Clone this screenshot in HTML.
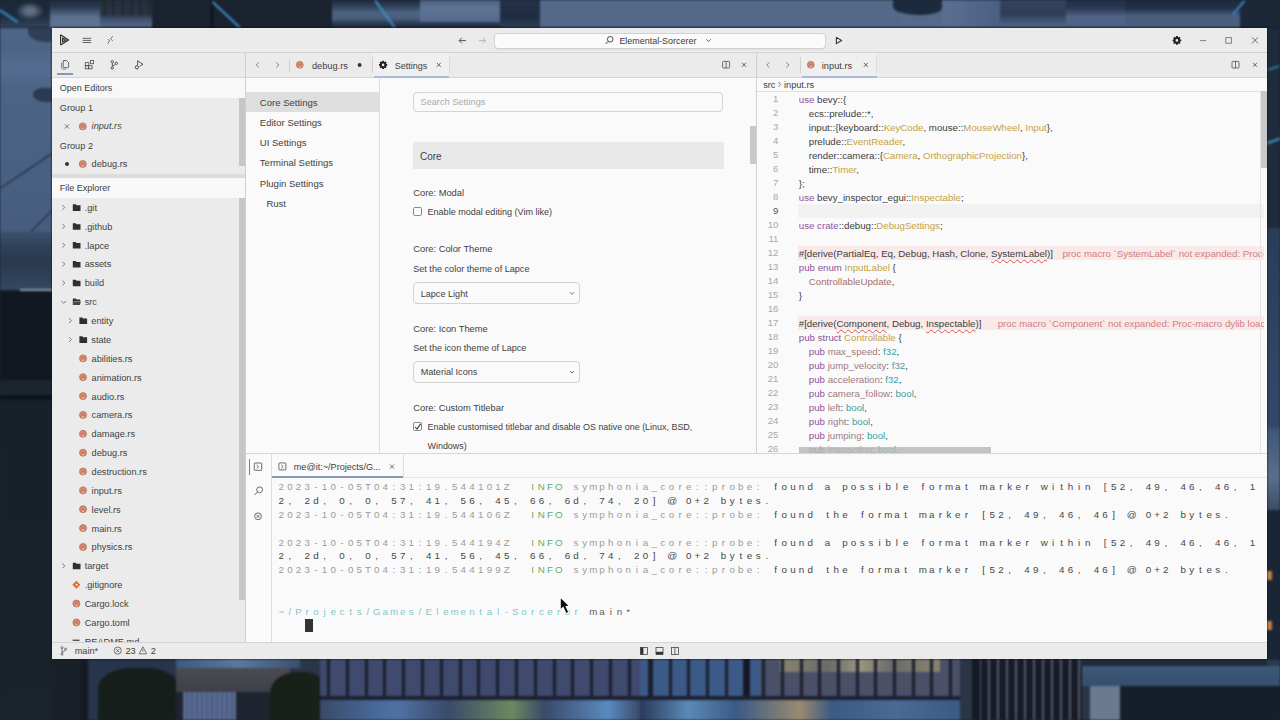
<!DOCTYPE html><html><head><meta charset="utf-8"><style>
html,body{margin:0;padding:0;}
body{width:1280px;height:720px;overflow:hidden;position:relative;background:#1b2330;font-family:"Liberation Sans",sans-serif;}
.r{position:absolute;}
.t{position:absolute;white-space:pre;line-height:1;}
.m{font-family:"Liberation Mono",monospace;}
.tr i{display:inline-block;width:8.675px;font-style:normal;text-align:center;}
</style></head><body>

<div class="r" style="left:0;top:0;width:1280px;height:720px;filter:blur(1.2px)">
<div class="r" style="left:0.00px;top:0.00px;width:1280.00px;height:28.00px;background:#55698a;"></div>
<div class="r" style="left:0.00px;top:0.00px;width:50.00px;height:28.00px;background:linear-gradient(180deg,#1c2838 0%,#1f2b3c 55%,#33465f 100%);"></div>
<div class="r" style="left:16.00px;top:2.00px;width:28.00px;height:18.00px;background:radial-gradient(closest-side,#5d6f86 30%,rgba(93,111,134,0));"></div>
<div class="r" style="left:0;top:9px;width:22px;height:2.2px;background:#2f8fcf;transform:rotate(34deg);transform-origin:0 0;"></div>
<div class="r" style="left:50.00px;top:0.00px;width:50.00px;height:28.00px;background:linear-gradient(180deg,#1f2b3c 0%,#2a3a50 25%,#5a7090 60%,#607694 100%);"></div>
<div class="r" style="left:100.00px;top:0.00px;width:52.00px;height:28.00px;background:linear-gradient(180deg,#262f3c 0%,#2a3342 50%,#465a78 75%,#54698a 100%);"></div>
<div class="r" style="left:104.00px;top:0.00px;width:46.00px;height:16.00px;background:repeating-linear-gradient(90deg,rgba(10,14,20,.6) 0,rgba(10,14,20,.6) 1px,rgba(0,0,0,0) 1px,rgba(0,0,0,0) 9px);"></div>
<div class="r" style="left:152.00px;top:0.00px;width:180.00px;height:28.00px;background:#1a2230;"></div>
<div class="r" style="left:210.50px;top:0.00px;width:2.00px;height:28.00px;background:#0a0e16;"></div>
<div class="r" style="left:213px;top:1px;width:38px;height:2.4px;background:#3c92c9;transform:rotate(43deg);transform-origin:0 0;"></div>
<div class="r" style="left:332.00px;top:0.00px;width:168.00px;height:28.00px;background:linear-gradient(180deg,#1e2a3c 0%,#2a3a52 18%,#4d6383 45%,#4a6080 65%,#283850 85%,#1e2a3a 100%);"></div>
<div class="r" style="left:420.00px;top:0.00px;width:80.00px;height:22.00px;background:linear-gradient(180deg,#4a6080,#5d7595 40%,#55698a);"></div>
<div class="r" style="left:376px;top:0px;width:33px;height:2px;background:#3f92c6;transform:rotate(54deg);transform-origin:0 0;"></div>
<div class="r" style="left:500.00px;top:0.00px;width:40.00px;height:28.00px;background:linear-gradient(180deg,#24324a 0%,#1f2c40 60%,#2f405a 100%);"></div>
<div class="r" style="left:540.00px;top:0.00px;width:360.00px;height:28.00px;background:linear-gradient(180deg,#55698a,#536889);"></div>
<div class="r" style="left:893.00px;top:0.00px;width:49.00px;height:15.00px;background:#1c2a3e;border-radius:0 0 45% 55%;"></div>
<div class="r" style="left:942.00px;top:0.00px;width:58.00px;height:28.00px;background:linear-gradient(90deg,#5a6f90,#4a6083);"></div>
<div class="r" style="left:1000.00px;top:0.00px;width:66.00px;height:28.00px;background:linear-gradient(180deg,#34455f 0%,#2e3d55 50%,#4d6283 90%);"></div>
<div class="r" style="left:1066.00px;top:0.00px;width:59.00px;height:28.00px;background:linear-gradient(180deg,#22304a 0%,#2a3a52 30%,#50658a 60%,#4d6283 100%);"></div>
<div class="r" style="left:1125.00px;top:0.00px;width:115.00px;height:28.00px;background:linear-gradient(180deg,#1e2a3c 0%,#22304a 30%,#4a5d7c 55%,#4d6080 100%);"></div>
<div class="r" style="left:1240.00px;top:0.00px;width:40.00px;height:28.00px;background:#1c2838;"></div>
<div class="r" style="left:1232px;top:14px;width:18px;height:2px;background:#3a8ac0;transform:rotate(-50deg);transform-origin:0 0;"></div>
<div class="r" style="left:0.00px;top:26.50px;width:1280.00px;height:1.50px;background:rgba(10,14,20,0.6);"></div>
<div class="r" style="left:0.00px;top:28.00px;width:52.00px;height:204.00px;background:linear-gradient(180deg,#4d6688 0%,#4a6385 50%,#465d7e 100%);"></div>
<div class="r" style="left:28.00px;top:28.00px;width:28.00px;height:14.00px;background:#2e3e56;border-radius:0 0 0 70%;"></div>
<div class="r" style="left:0.00px;top:50.00px;width:52.00px;height:40.00px;background:linear-gradient(180deg,rgba(90,116,152,0),rgba(90,116,152,.5) 50%,rgba(90,116,152,0));"></div>
<div class="r" style="left:33.00px;top:88.00px;width:23.00px;height:14.00px;background:#2a3a52;border-radius:50% 0 0 60%;"></div>
<div class="r" style="left:0;top:188px;width:62px;height:1.2px;background:#14202e;transform:rotate(-34deg);transform-origin:0 0;"></div>
<div class="r" style="left:0;top:262px;width:85px;height:1.2px;background:#14202e;transform:rotate(-45deg);transform-origin:0 0;"></div>
<div class="r" style="left:0.00px;top:232.00px;width:52.00px;height:58.00px;background:linear-gradient(180deg,#3a506c 0%,#2c3d54 35%,#2a3a50 55%,#34485f 100%);"></div>
<div class="r" style="left:20.00px;top:289.00px;width:32.00px;height:2.00px;background:#8a9cb0;"></div>
<div class="r" style="left:0.00px;top:291.00px;width:52.00px;height:89.00px;background:#111820;"></div>
<div class="r" style="left:0.00px;top:380.00px;width:52.00px;height:15.00px;background:#1a2530;"></div>
<div class="r" style="left:0.00px;top:395.00px;width:52.00px;height:5.00px;background:#0e141a;"></div>
<div class="r" style="left:0.00px;top:400.00px;width:52.00px;height:320.00px;background:linear-gradient(180deg,#18202a,#1a222c);"></div>
<div class="r" style="left:1267.00px;top:28.00px;width:13.00px;height:200.00px;background:#1d2b3c;"></div>
<div class="r" style="left:1267.00px;top:66.00px;width:13.00px;height:4.00px;background:linear-gradient(160deg,rgba(0,0,0,0) 30%,#3a8ac0 50%,rgba(0,0,0,0) 70%);"></div>
<div class="r" style="left:1267.00px;top:136.00px;width:13.00px;height:10.00px;background:linear-gradient(160deg,rgba(0,0,0,0) 35%,#4a96c8 50%,rgba(0,0,0,0) 65%);"></div>
<div class="r" style="left:1267.00px;top:228.00px;width:13.00px;height:200.00px;background:linear-gradient(180deg,#2a3d58,#34496a);"></div>
<div class="r" style="left:1267.00px;top:428.00px;width:13.00px;height:82.00px;background:linear-gradient(180deg,#3d5678,#5a6f8a 60%,#3a4d65);"></div>
<div class="r" style="left:1267.00px;top:510.00px;width:13.00px;height:150.00px;background:#1a2535;"></div>
<div class="r" style="left:1267.00px;top:571.00px;width:5.00px;height:9.00px;background:#c08040;"></div>
<div class="r" style="left:1267.00px;top:621.00px;width:5.00px;height:9.00px;background:#c08040;"></div>
<div class="r" style="left:1267.00px;top:660.00px;width:13.00px;height:60.00px;background:#2a3a4f;"></div>
<div class="r" style="left:52.00px;top:659.00px;width:1215.00px;height:61.00px;background:#2a3548;"></div>
<div class="r" style="left:52.00px;top:659.00px;width:28.00px;height:61.00px;background:#1a2028;"></div>
<div class="r" style="left:80.00px;top:659.00px;width:8.00px;height:61.00px;background:#141a22;"></div>
<div class="r" style="left:88.00px;top:659.00px;width:88.00px;height:61.00px;background:#26344c;"></div>
<div class="r" style="left:98.00px;top:668.00px;width:82.00px;height:52.00px;background:#161e1c;border-radius:40% 40% 0 0;"></div>
<div class="r" style="left:176.00px;top:659.00px;width:124.00px;height:9.00px;background:linear-gradient(90deg,#3a5a80,#5a78a0 50%,#3a5070);"></div>
<div class="r" style="left:176.00px;top:668.00px;width:114.00px;height:24.00px;background:linear-gradient(180deg,#4a4a52,#3e4048);"></div>
<div class="r" style="left:176.00px;top:692.00px;width:7.00px;height:28.00px;background:#1e2430;"></div>
<div class="r" style="left:183.00px;top:692.00px;width:53.00px;height:28.00px;background:repeating-linear-gradient(90deg,#5a6c94 0,#5a6c94 3px,#4a5a80 3px,#4a5a80 5px);"></div>
<div class="r" style="left:236.00px;top:692.00px;width:54.00px;height:28.00px;background:#1e2530;"></div>
<div class="r" style="left:270.00px;top:672.00px;width:60.00px;height:48.00px;background:#172019;border-radius:45% 45% 0 0;"></div>
<div class="r" style="left:320.00px;top:659.00px;width:320.00px;height:41.00px;background:#3f4a6e;"></div>
<div class="r" style="left:320.00px;top:659.00px;width:320.00px;height:38.00px;background:repeating-linear-gradient(90deg,#1a1e2c 0,#1a1e2c 3px,rgba(0,0,0,0) 3px,rgba(0,0,0,0) 18.8px);background-position:7px 0;"></div>
<div class="r" style="left:320.00px;top:696.00px;width:320.00px;height:4.00px;background:#1c2030;"></div>
<div class="r" style="left:320.00px;top:700.00px;width:320.00px;height:20.00px;background:linear-gradient(90deg,#3a4a6a,#4a6ca0 20%,#5070a0 25%,#3a4a6a 40%,#6a8a60 60%,#3a4a6a 70%,#5a8ac0 90%,#3a4a6a);"></div>
<div class="r" style="left:640.00px;top:659.00px;width:120.00px;height:41.00px;background:#3c5a88;"></div>
<div class="r" style="left:760.00px;top:659.00px;width:200.00px;height:41.00px;background:#4a5068;"></div>
<div class="r" style="left:780.00px;top:659.00px;width:160.00px;height:13.00px;background:linear-gradient(90deg,#8a8470,#6a6a68 30%,#9a9680 50%,#6a6a68 70%,#8a8470);"></div>
<div class="r" style="left:640.00px;top:659.00px;width:320.00px;height:38.00px;background:repeating-linear-gradient(90deg,#1a1e2c 0,#1a1e2c 3px,rgba(0,0,0,0) 3px,rgba(0,0,0,0) 18.7px);background-position:10px 0;"></div>
<div class="r" style="left:744.00px;top:659.00px;width:6.00px;height:61.00px;background:#141824;"></div>
<div class="r" style="left:640.00px;top:696.00px;width:320.00px;height:4.00px;background:#1c2030;"></div>
<div class="r" style="left:640.00px;top:700.00px;width:320.00px;height:20.00px;background:linear-gradient(90deg,#2a3a5a,#5a8ab8 15%,#3a5a85 30%,#9a8a70 50%,#3a5a85 60%,#4a6a95 80%,#3a5a85);"></div>
<div class="r" style="left:960.00px;top:659.00px;width:15.00px;height:61.00px;background:#2a3545;"></div>
<div class="r" style="left:972.00px;top:659.00px;width:110.00px;height:61.00px;background:repeating-linear-gradient(90deg,#161b26 0,#161b26 7px,#555b6a 7px,#555b6a 9px);"></div>
<div class="r" style="left:972.00px;top:659.00px;width:8.00px;height:61.00px;background:#141a24;"></div>
<div class="r" style="left:1080.00px;top:659.00px;width:187.00px;height:8.00px;background:#1f2a3a;"></div>
<div class="r" style="left:1082.00px;top:666.00px;width:198.00px;height:20.00px;background:linear-gradient(180deg,#3e5878,#34506e);"></div>
<div class="r" style="left:1090.00px;top:686.00px;width:30.00px;height:34.00px;background:#6a7a90;"></div>
<div class="r" style="left:1120.00px;top:686.00px;width:160.00px;height:34.00px;background:#151f2b;"></div>
</div>
<div class="r" style="left:52.00px;top:28.00px;width:1215.00px;height:631.00px;background:#fafafa;box-shadow:0 0 2px rgba(0,0,0,.35);"></div>
<div class="r" style="left:52.00px;top:28.00px;width:1215.00px;height:24.50px;background:#ebebeb;"></div>
<div class="r" style="left:52.00px;top:52.00px;width:1215.00px;height:1.00px;background:#d3d3d3;"></div>
<div class="r" style="left:493.50px;top:32.50px;width:332.20px;height:16.30px;background:#fbfbfb;border:1px solid #d2d2d2;border-radius:4px;box-sizing:border-box;box-shadow:0 1px 1px rgba(0,0,0,.06);"></div>
<div class="t" style="left:619.40px;top:36.82px;font-size:8.95px;color:#3a3a3a;">Elemental-Sorcerer</div>
<div class="r" style="left:52.00px;top:53.00px;width:193.50px;height:24.00px;background:#ebebeb;"></div>
<div class="r" style="left:52.00px;top:77.00px;width:193.50px;height:1.00px;background:#d6d6d6;"></div>
<div class="r" style="left:57.00px;top:73.20px;width:16.20px;height:1.50px;background:#8798bd;"></div>
<div class="r" style="left:52.00px;top:78.00px;width:193.50px;height:20.00px;background:#f8f8f8;"></div>
<div class="t" style="left:59.80px;top:84.38px;font-size:9.0px;color:#3f3f3f;">Open Editors</div>
<div class="r" style="left:52.00px;top:98.00px;width:193.50px;height:75.50px;background:#ebebeb;"></div>
<div class="r" style="left:238.80px;top:98.00px;width:6.70px;height:68.00px;background:#c6c6c6;"></div>
<div class="t" style="left:59.80px;top:103.61px;font-size:9.2px;color:#3f3f3f;">Group 1</div>
<div class="t" style="left:91.60px;top:121.71px;font-size:9.2px;color:#3f3f3f;font-style:italic;">input.rs</div>
<div class="t" style="left:59.80px;top:141.61px;font-size:9.2px;color:#3f3f3f;">Group 2</div>
<div class="t" style="left:91.60px;top:160.01px;font-size:9.2px;color:#3f3f3f;">debug.rs</div>
<div class="r" style="left:52.00px;top:173.50px;width:193.50px;height:4.30px;background:#dcdcdc;"></div>
<div class="r" style="left:52.00px;top:177.80px;width:193.50px;height:20.20px;background:#f8f8f8;"></div>
<div class="t" style="left:59.80px;top:184.18px;font-size:9.0px;color:#3f3f3f;">File Explorer</div>
<div class="r" style="left:52.00px;top:198.00px;width:193.50px;height:444.40px;background:#ebebeb;"></div>
<div class="r" style="left:238.60px;top:198.00px;width:6.90px;height:402.00px;background:#c6c6c6;"></div>
<div class="t" style="left:84.70px;top:203.91px;font-size:9.2px;color:#3f3f3f;">.git</div>
<div class="t" style="left:84.70px;top:222.77px;font-size:9.2px;color:#3f3f3f;">.github</div>
<div class="t" style="left:84.70px;top:241.63px;font-size:9.2px;color:#3f3f3f;">.lapce</div>
<div class="t" style="left:84.70px;top:260.49px;font-size:9.2px;color:#3f3f3f;">assets</div>
<div class="t" style="left:84.70px;top:279.35px;font-size:9.2px;color:#3f3f3f;">build</div>
<div class="t" style="left:84.70px;top:298.21px;font-size:9.2px;color:#3f3f3f;">src</div>
<div class="t" style="left:91.30px;top:317.07px;font-size:9.2px;color:#3f3f3f;">entity</div>
<div class="t" style="left:91.30px;top:335.93px;font-size:9.2px;color:#3f3f3f;">state</div>
<div class="t" style="left:91.60px;top:354.79px;font-size:9.2px;color:#3f3f3f;">abilities.rs</div>
<div class="t" style="left:91.60px;top:373.65px;font-size:9.2px;color:#3f3f3f;">animation.rs</div>
<div class="t" style="left:91.60px;top:392.51px;font-size:9.2px;color:#3f3f3f;">audio.rs</div>
<div class="t" style="left:91.60px;top:411.37px;font-size:9.2px;color:#3f3f3f;">camera.rs</div>
<div class="t" style="left:91.60px;top:430.23px;font-size:9.2px;color:#3f3f3f;">damage.rs</div>
<div class="t" style="left:91.60px;top:449.09px;font-size:9.2px;color:#3f3f3f;">debug.rs</div>
<div class="t" style="left:91.60px;top:467.95px;font-size:9.2px;color:#3f3f3f;">destruction.rs</div>
<div class="t" style="left:91.60px;top:486.81px;font-size:9.2px;color:#3f3f3f;">input.rs</div>
<div class="t" style="left:91.60px;top:505.67px;font-size:9.2px;color:#3f3f3f;">level.rs</div>
<div class="t" style="left:91.60px;top:524.53px;font-size:9.2px;color:#3f3f3f;">main.rs</div>
<div class="t" style="left:91.60px;top:543.39px;font-size:9.2px;color:#3f3f3f;">physics.rs</div>
<div class="t" style="left:84.70px;top:562.25px;font-size:9.2px;color:#3f3f3f;">target</div>
<div class="t" style="left:84.70px;top:581.11px;font-size:9.2px;color:#3f3f3f;">.gitignore</div>
<div class="t" style="left:84.70px;top:599.97px;font-size:9.2px;color:#3f3f3f;">Cargo.lock</div>
<div class="t" style="left:84.70px;top:618.83px;font-size:9.2px;color:#3f3f3f;">Cargo.toml</div>
<div class="t" style="left:84.70px;top:637.69px;font-size:9.2px;color:#3f3f3f;">README.md</div>
<div class="r" style="left:52.00px;top:642.00px;width:1215.00px;height:17.00px;background:#ebebeb;"></div>
<div class="r" style="left:52.00px;top:642.00px;width:1215.00px;height:1.00px;background:#d4d4d4;"></div>
<div class="r" style="left:245.00px;top:53.00px;width:1.00px;height:589.00px;background:#d0d0d0;"></div>
<div class="r" style="left:246.30px;top:53.00px;width:510.20px;height:24.00px;background:#ebebeb;"></div>
<div class="r" style="left:246.30px;top:77.00px;width:510.20px;height:1.00px;background:#d6d6d6;"></div>
<div class="r" style="left:289.00px;top:59.50px;width:1.00px;height:12.00px;background:#cfcfcf;"></div>
<div class="t" style="left:311.90px;top:61.57px;font-size:9.25px;color:#3f3f3f;">debug.rs</div>
<div class="r" style="left:372.00px;top:57.00px;width:1.00px;height:16.00px;background:#cfcfcf;"></div>
<div class="r" style="left:372.70px;top:53.00px;width:76.50px;height:24.00px;background:#efefef;"></div>
<div class="t" style="left:394.80px;top:61.78px;font-size:9.0px;color:#3f3f3f;">Settings</div>
<div class="r" style="left:373.50px;top:76.00px;width:75.70px;height:1.60px;background:#a9bada;"></div>
<div class="r" style="left:449.00px;top:57.00px;width:1.00px;height:16.00px;background:#dadada;"></div>
<div class="r" style="left:246.30px;top:78.00px;width:132.90px;height:375.00px;background:#fafafa;"></div>
<div class="r" style="left:379.00px;top:78.00px;width:1.00px;height:375.00px;background:#dedede;"></div>
<div class="r" style="left:246.30px;top:91.60px;width:132.90px;height:20.20px;background:#dedede;"></div>
<div class="t" style="left:259.80px;top:98.02px;font-size:9.55px;color:#3f3f3f;">Core Settings</div>
<div class="t" style="left:259.80px;top:117.92px;font-size:9.55px;color:#3f3f3f;">Editor Settings</div>
<div class="t" style="left:259.80px;top:138.12px;font-size:9.55px;color:#3f3f3f;">UI Settings</div>
<div class="t" style="left:259.80px;top:158.32px;font-size:9.55px;color:#3f3f3f;">Terminal Settings</div>
<div class="t" style="left:259.80px;top:178.62px;font-size:9.55px;color:#3f3f3f;">Plugin Settings</div>
<div class="t" style="left:266.40px;top:198.82px;font-size:9.55px;color:#3f3f3f;">Rust</div>
<div class="r" style="left:380.00px;top:78.00px;width:376.50px;height:375.00px;background:#fafafa;"></div>
<div class="r" style="left:413.10px;top:91.90px;width:309.70px;height:20.00px;background:#fafafa;border:1px solid #d4d4d4;border-radius:4px;box-sizing:border-box;"></div>
<div class="t" style="left:420.50px;top:97.91px;font-size:9.2px;color:#ababab;">Search Settings</div>
<div class="r" style="left:413.10px;top:141.90px;width:310.60px;height:26.80px;background:#e9e9e9;"></div>
<div class="t" style="left:420.00px;top:151.53px;font-size:10.0px;color:#3f3f3f;">Core</div>
<div class="r" style="left:750.30px;top:126.20px;width:6.00px;height:38.20px;background:#c8c8c8;"></div>
<div class="t" style="left:413.20px;top:188.59px;font-size:9.35px;color:#3f3f3f;">Core: Modal</div>
<div class="r" style="left:412.9px;top:207.4px;width:9px;height:9px;border:1px solid #8a8a8a;border-radius:1.8px;box-sizing:border-box;"></div>
<div class="t" style="left:427.50px;top:208.14px;font-size:9.05px;color:#3f3f3f;">Enable modal editing (Vim like)</div>
<div class="t" style="left:413.20px;top:245.19px;font-size:9.35px;color:#3f3f3f;">Core: Color Theme</div>
<div class="t" style="left:413.20px;top:264.70px;font-size:9.1px;color:#3f3f3f;">Set the color theme of Lapce</div>
<div class="r" style="left:413.40px;top:282.40px;width:167.00px;height:22.00px;background:#fafafa;border:1px solid #d2d2d2;border-radius:4px;box-sizing:border-box;"></div>
<div class="t" style="left:420.70px;top:289.90px;font-size:9.1px;color:#3f3f3f;">Lapce Light</div>
<div class="t" style="left:413.20px;top:324.69px;font-size:9.35px;color:#3f3f3f;">Core: Icon Theme</div>
<div class="t" style="left:413.20px;top:344.10px;font-size:9.1px;color:#3f3f3f;">Set the icon theme of Lapce</div>
<div class="r" style="left:413.40px;top:361.00px;width:167.00px;height:22.30px;background:#fafafa;border:1px solid #d2d2d2;border-radius:4px;box-sizing:border-box;"></div>
<div class="t" style="left:420.70px;top:368.40px;font-size:9.1px;color:#3f3f3f;">Material Icons</div>
<div class="t" style="left:413.20px;top:403.89px;font-size:9.35px;color:#3f3f3f;">Core: Custom Titlebar</div>
<div class="r" style="left:412.9px;top:422.40000000000003px;width:9px;height:9px;border:1px solid #8a8a8a;border-radius:1.8px;box-sizing:border-box;"></div>
<div class="t" style="left:427.50px;top:423.42px;font-size:8.95px;color:#3f3f3f;">Enable customised titlebar and disable OS native one (Linux, BSD,</div>
<div class="t" style="left:427.50px;top:442.12px;font-size:8.95px;color:#3f3f3f;">Windows)</div>
<div class="r" style="left:756.00px;top:53.00px;width:1.00px;height:400.00px;background:#d0d0d0;"></div>
<div class="r" style="left:757.30px;top:53.00px;width:509.70px;height:24.00px;background:#ebebeb;"></div>
<div class="r" style="left:757.30px;top:77.00px;width:509.70px;height:1.00px;background:#d6d6d6;"></div>
<div class="r" style="left:800.00px;top:57.00px;width:1.00px;height:16.00px;background:#d0d0d0;"></div>
<div class="r" style="left:801.00px;top:53.00px;width:75.50px;height:24.00px;background:#efefef;"></div>
<div class="t" style="left:821.80px;top:61.57px;font-size:9.25px;color:#3f3f3f;">input.rs</div>
<div class="r" style="left:801.50px;top:76.00px;width:75.00px;height:1.60px;background:#a9bada;"></div>
<div class="r" style="left:876.00px;top:57.00px;width:1.00px;height:16.00px;background:#dadada;"></div>
<div class="r" style="left:757.30px;top:78.00px;width:509.70px;height:13.40px;background:#fafafa;"></div>
<div class="r" style="left:757.30px;top:91.00px;width:509.70px;height:1.00px;background:#e2e2e2;"></div>
<div class="t" style="left:763.20px;top:80.71px;font-size:9.2px;color:#3f3f3f;">src</div>
<div class="t" style="left:784.00px;top:80.71px;font-size:9.2px;color:#3f3f3f;">input.rs</div>
<div class="r" style="left:757.30px;top:92.00px;width:509.70px;height:361.00px;background:#fafafa;"></div>
<div class="r" style="left:798.00px;top:204.00px;width:466.00px;height:14.00px;background:#f2f2f2;"></div>
<div class="r" style="left:798.00px;top:246.00px;width:466.00px;height:14.00px;background:#f9e9e9;"></div>
<div class="r" style="left:798.00px;top:316.00px;width:466.00px;height:14.00px;background:#f9e9e9;"></div>
<div class="r" style="left:0;top:0;width:1264px;height:453px;overflow:hidden">
<div class="t" style="left:739.4px;width:39px;text-align:right;top:94.47px;font-size:9.6px;color:#a8a8a8;">1</div>
<div class="t" style="left:739.4px;width:39px;text-align:right;top:108.47px;font-size:9.6px;color:#a8a8a8;">2</div>
<div class="t" style="left:739.4px;width:39px;text-align:right;top:122.47px;font-size:9.6px;color:#a8a8a8;">3</div>
<div class="t" style="left:739.4px;width:39px;text-align:right;top:136.47px;font-size:9.6px;color:#a8a8a8;">4</div>
<div class="t" style="left:739.4px;width:39px;text-align:right;top:150.47px;font-size:9.6px;color:#a8a8a8;">5</div>
<div class="t" style="left:739.4px;width:39px;text-align:right;top:164.47px;font-size:9.6px;color:#a8a8a8;">6</div>
<div class="t" style="left:739.4px;width:39px;text-align:right;top:178.47px;font-size:9.6px;color:#a8a8a8;">7</div>
<div class="t" style="left:739.4px;width:39px;text-align:right;top:192.47px;font-size:9.6px;color:#a8a8a8;">8</div>
<div class="t" style="left:739.4px;width:39px;text-align:right;top:206.47px;font-size:9.6px;color:#555;">9</div>
<div class="t" style="left:739.4px;width:39px;text-align:right;top:220.47px;font-size:9.6px;color:#a8a8a8;">10</div>
<div class="t" style="left:739.4px;width:39px;text-align:right;top:234.47px;font-size:9.6px;color:#a8a8a8;">11</div>
<div class="t" style="left:739.4px;width:39px;text-align:right;top:248.47px;font-size:9.6px;color:#a8a8a8;">12</div>
<div class="t" style="left:739.4px;width:39px;text-align:right;top:262.47px;font-size:9.6px;color:#a8a8a8;">13</div>
<div class="t" style="left:739.4px;width:39px;text-align:right;top:276.47px;font-size:9.6px;color:#a8a8a8;">14</div>
<div class="t" style="left:739.4px;width:39px;text-align:right;top:290.47px;font-size:9.6px;color:#a8a8a8;">15</div>
<div class="t" style="left:739.4px;width:39px;text-align:right;top:304.47px;font-size:9.6px;color:#a8a8a8;">16</div>
<div class="t" style="left:739.4px;width:39px;text-align:right;top:318.47px;font-size:9.6px;color:#a8a8a8;">17</div>
<div class="t" style="left:739.4px;width:39px;text-align:right;top:332.47px;font-size:9.6px;color:#a8a8a8;">18</div>
<div class="t" style="left:739.4px;width:39px;text-align:right;top:346.47px;font-size:9.6px;color:#a8a8a8;">19</div>
<div class="t" style="left:739.4px;width:39px;text-align:right;top:360.47px;font-size:9.6px;color:#a8a8a8;">20</div>
<div class="t" style="left:739.4px;width:39px;text-align:right;top:374.47px;font-size:9.6px;color:#a8a8a8;">21</div>
<div class="t" style="left:739.4px;width:39px;text-align:right;top:388.47px;font-size:9.6px;color:#a8a8a8;">22</div>
<div class="t" style="left:739.4px;width:39px;text-align:right;top:402.47px;font-size:9.6px;color:#a8a8a8;">23</div>
<div class="t" style="left:739.4px;width:39px;text-align:right;top:416.47px;font-size:9.6px;color:#a8a8a8;">24</div>
<div class="t" style="left:739.4px;width:39px;text-align:right;top:430.47px;font-size:9.6px;color:#a8a8a8;">25</div>
<div class="t" style="left:739.4px;width:39px;text-align:right;top:444.47px;font-size:9.6px;color:#a8a8a8;">26</div>
<div class="t" style="left:798.75px;top:94.99px;font-size:9.7px;color:#3d3d3d;"><span style="color:#8c559a">use</span> bevy::{</div>
<div class="t" style="left:808.75px;top:108.99px;font-size:9.7px;color:#3d3d3d;">ecs::prelude::*,</div>
<div class="t" style="left:808.75px;top:122.99px;font-size:9.7px;color:#3d3d3d;">input::{keyboard::<span style="color:#c4a347">KeyCode</span>, mouse::<span style="color:#c4a347">MouseWheel</span>, <span style="color:#c4a347">Input</span>},</div>
<div class="t" style="left:808.75px;top:136.99px;font-size:9.7px;color:#3d3d3d;">prelude::<span style="color:#c4a347">EventReader</span>,</div>
<div class="t" style="left:808.75px;top:150.99px;font-size:9.7px;color:#3d3d3d;">render::camera::{<span style="color:#c4a347">Camera</span>, <span style="color:#c4a347">OrthographicProjection</span>},</div>
<div class="t" style="left:808.75px;top:164.99px;font-size:9.7px;color:#3d3d3d;">time::<span style="color:#c4a347">Timer</span>,</div>
<div class="t" style="left:798.75px;top:178.99px;font-size:9.7px;color:#3d3d3d;">};</div>
<div class="t" style="left:798.75px;top:192.99px;font-size:9.7px;color:#3d3d3d;"><span style="color:#8c559a">use</span> bevy_inspector_egui::<span style="color:#c4a347">Inspectable</span>;</div>
<div class="t" style="left:798.75px;top:220.99px;font-size:9.7px;color:#3d3d3d;"><span style="color:#8c559a">use</span> <span style="color:#8c559a">crate</span>::debug::<span style="color:#c4a347">DebugSettings</span>;</div>
<div class="t" style="left:798.75px;top:248.99px;font-size:9.7px;color:#3d3d3d;">#[derive(PartialEq, Eq, Debug, Hash, Clone, <span style="text-decoration:underline wavy #e05050;text-decoration-thickness:0.6px;text-underline-offset:2px">SystemLabel</span>)]</div>
<div class="t" style="left:1062.40px;top:248.99px;font-size:9.7px;color:#cf7f7f;">proc macro `SystemLabel` not expanded: Proc-macro dylib loading failed</div>
<div class="t" style="left:798.75px;top:262.99px;font-size:9.7px;color:#3d3d3d;"><span style="color:#8c559a">pub</span> <span style="color:#8c559a">enum</span> <span style="color:#c4a347">InputLabel</span> {</div>
<div class="t" style="left:808.75px;top:276.99px;font-size:9.7px;color:#3d3d3d;"><span style="color:#a36f6f">ControllableUpdate</span>,</div>
<div class="t" style="left:798.75px;top:290.99px;font-size:9.7px;color:#3d3d3d;">}</div>
<div class="t" style="left:798.75px;top:318.99px;font-size:9.7px;color:#3d3d3d;">#[derive(<span style="text-decoration:underline wavy #e05050;text-decoration-thickness:0.6px;text-underline-offset:2px">Component</span>, Debug, <span style="text-decoration:underline wavy #e05050;text-decoration-thickness:0.6px;text-underline-offset:2px">Inspectable</span>)]</div>
<div class="t" style="left:997.70px;top:318.99px;font-size:9.7px;color:#cf7f7f;">proc macro `Component` not expanded: Proc-macro dylib loading failed</div>
<div class="t" style="left:798.75px;top:332.99px;font-size:9.7px;color:#3d3d3d;"><span style="color:#8c559a">pub</span> <span style="color:#8c559a">struct</span> <span style="color:#c4a347">Controllable</span> {</div>
<div class="t" style="left:808.75px;top:346.99px;font-size:9.7px;color:#3d3d3d;"><span style="color:#8c559a">pub</span> <span style="color:#9e7a82">max_speed</span>: <span style="color:#3c9ea4">f32</span>,</div>
<div class="t" style="left:808.75px;top:360.99px;font-size:9.7px;color:#3d3d3d;"><span style="color:#8c559a">pub</span> <span style="color:#9e7a82">jump_velocity</span>: <span style="color:#3c9ea4">f32</span>,</div>
<div class="t" style="left:808.75px;top:374.99px;font-size:9.7px;color:#3d3d3d;"><span style="color:#8c559a">pub</span> <span style="color:#9e7a82">acceleration</span>: <span style="color:#3c9ea4">f32</span>,</div>
<div class="t" style="left:808.75px;top:388.99px;font-size:9.7px;color:#3d3d3d;"><span style="color:#8c559a">pub</span> <span style="color:#9e7a82">camera_follow</span>: <span style="color:#3c9ea4">bool</span>,</div>
<div class="t" style="left:808.75px;top:402.99px;font-size:9.7px;color:#3d3d3d;"><span style="color:#8c559a">pub</span> <span style="color:#9e7a82">left</span>: <span style="color:#3c9ea4">bool</span>,</div>
<div class="t" style="left:808.75px;top:416.99px;font-size:9.7px;color:#3d3d3d;"><span style="color:#8c559a">pub</span> <span style="color:#9e7a82">right</span>: <span style="color:#3c9ea4">bool</span>,</div>
<div class="t" style="left:808.75px;top:430.99px;font-size:9.7px;color:#3d3d3d;"><span style="color:#8c559a">pub</span> <span style="color:#9e7a82">jumping</span>: <span style="color:#3c9ea4">bool</span>,</div>
<div class="t" style="left:808.75px;top:444.99px;font-size:9.7px;color:#3d3d3d;"><span style="color:#8c559a">pub</span> <span style="color:#9e7a82">interacting</span>: <span style="color:#3c9ea4">bool</span>,</div>
</div>
<div class="r" style="left:1260.00px;top:92.00px;width:1.00px;height:361.00px;background:#e4e4e4;"></div>
<div class="r" style="left:1261.00px;top:90.50px;width:5.50px;height:77.00px;background:#c8c8c8;"></div>
<div class="r" style="left:798.50px;top:447.30px;width:192.10px;height:6.20px;background:rgba(185,185,185,0.85);"></div>
<div class="r" style="left:1267.00px;top:28.00px;width:13.00px;height:631.00px;background:transparent;"></div>
<div class="r" style="left:246.30px;top:453.00px;width:1020.70px;height:189.00px;background:#fafafa;"></div>
<div class="r" style="left:246.30px;top:453.00px;width:1020.70px;height:1.00px;background:#d6d6d6;"></div>
<div class="r" style="left:271.00px;top:453.00px;width:1.00px;height:189.00px;background:#dcdcdc;"></div>
<div class="r" style="left:249.00px;top:459.00px;width:1.00px;height:16.00px;background:#6f7f9c;"></div>
<div class="r" style="left:271.80px;top:453.90px;width:131.70px;height:23.40px;background:#fafafa;"></div>
<div class="r" style="left:271.80px;top:477.00px;width:995.20px;height:1.00px;background:#e6e6e6;"></div>
<div class="r" style="left:272.20px;top:476.20px;width:130.80px;height:1.60px;background:#8798b8;"></div>
<div class="r" style="left:403.00px;top:453.90px;width:1.00px;height:23.40px;background:#dedede;"></div>
<div class="t" style="left:293.80px;top:462.80px;font-size:9.1px;color:#3f3f3f;">me@it:~/Projects/G...</div>
<div class="t tr" style="left:276.90px;top:481.70px;font-size:9.8px;"><span style="color:#9a9a9a"><i>2</i><i>0</i><i>2</i><i>3</i><i>-</i><i>1</i><i>0</i><i>-</i><i>0</i><i>5</i><i>T</i><i>0</i><i>4</i><i>:</i><i>3</i><i>1</i><i>:</i><i>1</i><i>9</i><i>.</i><i>5</i><i>4</i><i>4</i><i>1</i><i>0</i><i>1</i><i>Z</i></span><span style="color:#474747"><i>&nbsp;</i><i>&nbsp;</i></span><span style="color:#62ad62"><i>I</i><i>N</i><i>F</i><i>O</i></span><span style="color:#474747"><i>&nbsp;</i></span><span style="color:#9a9a9a"><i>s</i><i>y</i><i>m</i><i>p</i><i>h</i><i>o</i><i>n</i><i>i</i><i>a</i><i>_</i><i>c</i><i>o</i><i>r</i><i>e</i><i>:</i><i>:</i><i>p</i><i>r</i><i>o</i><i>b</i><i>e</i><i>:</i></span><span style="color:#474747"><i>&nbsp;</i><i>f</i><i>o</i><i>u</i><i>n</i><i>d</i><i>&nbsp;</i><i>a</i><i>&nbsp;</i><i>p</i><i>o</i><i>s</i><i>s</i><i>i</i><i>b</i><i>l</i><i>e</i><i>&nbsp;</i><i>f</i><i>o</i><i>r</i><i>m</i><i>a</i><i>t</i><i>&nbsp;</i><i>m</i><i>a</i><i>r</i><i>k</i><i>e</i><i>r</i><i>&nbsp;</i><i>w</i><i>i</i><i>t</i><i>h</i><i>i</i><i>n</i><i>&nbsp;</i><i>[</i><i>5</i><i>2</i><i>,</i><i>&nbsp;</i><i>4</i><i>9</i><i>,</i><i>&nbsp;</i><i>4</i><i>6</i><i>,</i><i>&nbsp;</i><i>4</i><i>6</i><i>,</i><i>&nbsp;</i><i>1</i></span></div>
<div class="t tr" style="left:276.90px;top:495.65px;font-size:9.8px;"><span style="color:#474747"><i>2</i><i>,</i><i>&nbsp;</i><i>2</i><i>d</i><i>,</i><i>&nbsp;</i><i>0</i><i>,</i><i>&nbsp;</i><i>0</i><i>,</i><i>&nbsp;</i><i>5</i><i>7</i><i>,</i><i>&nbsp;</i><i>4</i><i>1</i><i>,</i><i>&nbsp;</i><i>5</i><i>6</i><i>,</i><i>&nbsp;</i><i>4</i><i>5</i><i>,</i><i>&nbsp;</i><i>6</i><i>6</i><i>,</i><i>&nbsp;</i><i>6</i><i>d</i><i>,</i><i>&nbsp;</i><i>7</i><i>4</i><i>,</i><i>&nbsp;</i><i>2</i><i>0</i><i>]</i><i>&nbsp;</i><i>@</i><i>&nbsp;</i><i>0</i><i>+</i><i>2</i><i>&nbsp;</i><i>b</i><i>y</i><i>t</i><i>e</i><i>s</i><i>.</i></span></div>
<div class="t tr" style="left:276.90px;top:509.60px;font-size:9.8px;"><span style="color:#9a9a9a"><i>2</i><i>0</i><i>2</i><i>3</i><i>-</i><i>1</i><i>0</i><i>-</i><i>0</i><i>5</i><i>T</i><i>0</i><i>4</i><i>:</i><i>3</i><i>1</i><i>:</i><i>1</i><i>9</i><i>.</i><i>5</i><i>4</i><i>4</i><i>1</i><i>0</i><i>6</i><i>Z</i></span><span style="color:#474747"><i>&nbsp;</i><i>&nbsp;</i></span><span style="color:#62ad62"><i>I</i><i>N</i><i>F</i><i>O</i></span><span style="color:#474747"><i>&nbsp;</i></span><span style="color:#9a9a9a"><i>s</i><i>y</i><i>m</i><i>p</i><i>h</i><i>o</i><i>n</i><i>i</i><i>a</i><i>_</i><i>c</i><i>o</i><i>r</i><i>e</i><i>:</i><i>:</i><i>p</i><i>r</i><i>o</i><i>b</i><i>e</i><i>:</i></span><span style="color:#474747"><i>&nbsp;</i><i>f</i><i>o</i><i>u</i><i>n</i><i>d</i><i>&nbsp;</i><i>t</i><i>h</i><i>e</i><i>&nbsp;</i><i>f</i><i>o</i><i>r</i><i>m</i><i>a</i><i>t</i><i>&nbsp;</i><i>m</i><i>a</i><i>r</i><i>k</i><i>e</i><i>r</i><i>&nbsp;</i><i>[</i><i>5</i><i>2</i><i>,</i><i>&nbsp;</i><i>4</i><i>9</i><i>,</i><i>&nbsp;</i><i>4</i><i>6</i><i>,</i><i>&nbsp;</i><i>4</i><i>6</i><i>]</i><i>&nbsp;</i><i>@</i><i>&nbsp;</i><i>0</i><i>+</i><i>2</i><i>&nbsp;</i><i>b</i><i>y</i><i>t</i><i>e</i><i>s</i><i>.</i></span></div>
<div class="t tr" style="left:276.90px;top:537.50px;font-size:9.8px;"><span style="color:#9a9a9a"><i>2</i><i>0</i><i>2</i><i>3</i><i>-</i><i>1</i><i>0</i><i>-</i><i>0</i><i>5</i><i>T</i><i>0</i><i>4</i><i>:</i><i>3</i><i>1</i><i>:</i><i>1</i><i>9</i><i>.</i><i>5</i><i>4</i><i>4</i><i>1</i><i>9</i><i>4</i><i>Z</i></span><span style="color:#474747"><i>&nbsp;</i><i>&nbsp;</i></span><span style="color:#62ad62"><i>I</i><i>N</i><i>F</i><i>O</i></span><span style="color:#474747"><i>&nbsp;</i></span><span style="color:#9a9a9a"><i>s</i><i>y</i><i>m</i><i>p</i><i>h</i><i>o</i><i>n</i><i>i</i><i>a</i><i>_</i><i>c</i><i>o</i><i>r</i><i>e</i><i>:</i><i>:</i><i>p</i><i>r</i><i>o</i><i>b</i><i>e</i><i>:</i></span><span style="color:#474747"><i>&nbsp;</i><i>f</i><i>o</i><i>u</i><i>n</i><i>d</i><i>&nbsp;</i><i>a</i><i>&nbsp;</i><i>p</i><i>o</i><i>s</i><i>s</i><i>i</i><i>b</i><i>l</i><i>e</i><i>&nbsp;</i><i>f</i><i>o</i><i>r</i><i>m</i><i>a</i><i>t</i><i>&nbsp;</i><i>m</i><i>a</i><i>r</i><i>k</i><i>e</i><i>r</i><i>&nbsp;</i><i>w</i><i>i</i><i>t</i><i>h</i><i>i</i><i>n</i><i>&nbsp;</i><i>[</i><i>5</i><i>2</i><i>,</i><i>&nbsp;</i><i>4</i><i>9</i><i>,</i><i>&nbsp;</i><i>4</i><i>6</i><i>,</i><i>&nbsp;</i><i>4</i><i>6</i><i>,</i><i>&nbsp;</i><i>1</i></span></div>
<div class="t tr" style="left:276.90px;top:551.45px;font-size:9.8px;"><span style="color:#474747"><i>2</i><i>,</i><i>&nbsp;</i><i>2</i><i>d</i><i>,</i><i>&nbsp;</i><i>0</i><i>,</i><i>&nbsp;</i><i>0</i><i>,</i><i>&nbsp;</i><i>5</i><i>7</i><i>,</i><i>&nbsp;</i><i>4</i><i>1</i><i>,</i><i>&nbsp;</i><i>5</i><i>6</i><i>,</i><i>&nbsp;</i><i>4</i><i>5</i><i>,</i><i>&nbsp;</i><i>6</i><i>6</i><i>,</i><i>&nbsp;</i><i>6</i><i>d</i><i>,</i><i>&nbsp;</i><i>7</i><i>4</i><i>,</i><i>&nbsp;</i><i>2</i><i>0</i><i>]</i><i>&nbsp;</i><i>@</i><i>&nbsp;</i><i>0</i><i>+</i><i>2</i><i>&nbsp;</i><i>b</i><i>y</i><i>t</i><i>e</i><i>s</i><i>.</i></span></div>
<div class="t tr" style="left:276.90px;top:565.40px;font-size:9.8px;"><span style="color:#9a9a9a"><i>2</i><i>0</i><i>2</i><i>3</i><i>-</i><i>1</i><i>0</i><i>-</i><i>0</i><i>5</i><i>T</i><i>0</i><i>4</i><i>:</i><i>3</i><i>1</i><i>:</i><i>1</i><i>9</i><i>.</i><i>5</i><i>4</i><i>4</i><i>1</i><i>9</i><i>9</i><i>Z</i></span><span style="color:#474747"><i>&nbsp;</i><i>&nbsp;</i></span><span style="color:#62ad62"><i>I</i><i>N</i><i>F</i><i>O</i></span><span style="color:#474747"><i>&nbsp;</i></span><span style="color:#9a9a9a"><i>s</i><i>y</i><i>m</i><i>p</i><i>h</i><i>o</i><i>n</i><i>i</i><i>a</i><i>_</i><i>c</i><i>o</i><i>r</i><i>e</i><i>:</i><i>:</i><i>p</i><i>r</i><i>o</i><i>b</i><i>e</i><i>:</i></span><span style="color:#474747"><i>&nbsp;</i><i>f</i><i>o</i><i>u</i><i>n</i><i>d</i><i>&nbsp;</i><i>t</i><i>h</i><i>e</i><i>&nbsp;</i><i>f</i><i>o</i><i>r</i><i>m</i><i>a</i><i>t</i><i>&nbsp;</i><i>m</i><i>a</i><i>r</i><i>k</i><i>e</i><i>r</i><i>&nbsp;</i><i>[</i><i>5</i><i>2</i><i>,</i><i>&nbsp;</i><i>4</i><i>9</i><i>,</i><i>&nbsp;</i><i>4</i><i>6</i><i>,</i><i>&nbsp;</i><i>4</i><i>6</i><i>]</i><i>&nbsp;</i><i>@</i><i>&nbsp;</i><i>0</i><i>+</i><i>2</i><i>&nbsp;</i><i>b</i><i>y</i><i>t</i><i>e</i><i>s</i><i>.</i></span></div>
<div class="t tr" style="left:276.90px;top:607.25px;font-size:9.8px;"><span style="color:#86c6c8"><i>~</i><i>/</i><i>P</i><i>r</i><i>o</i><i>j</i><i>e</i><i>c</i><i>t</i><i>s</i><i>/</i><i>G</i><i>a</i><i>m</i><i>e</i><i>s</i><i>/</i><i>E</i><i>l</i><i>e</i><i>m</i><i>e</i><i>n</i><i>t</i><i>a</i><i>l</i><i>-</i><i>S</i><i>o</i><i>r</i><i>c</i><i>e</i><i>r</i><i>e</i><i>r</i></span><span style="color:#474747"><i>&nbsp;</i></span><span style="color:#5e5e5e"><i>m</i><i>a</i><i>i</i><i>n</i><i>*</i></span></div>
<div class="r" style="left:304.90px;top:619.20px;width:8.00px;height:12.80px;background:#333;"></div>
<div class="t" style="left:74.70px;top:646.81px;font-size:9.2px;color:#3f3f3f;">main*</div>
<div class="t" style="left:125.50px;top:646.81px;font-size:9.2px;color:#3f3f3f;">23</div>
<div class="t" style="left:150.70px;top:646.81px;font-size:9.2px;color:#3f3f3f;">2</div>
<svg class="r" style="left:0;top:0" width="1280" height="720" viewBox="0 0 1280 720"><path d="M60.6,34.8 V45 M60.6,34.8 L68.6,39.9 L60.6,45 M62.6,38 L66,39.9 L62.6,41.9 Z" fill="none" stroke="#333" stroke-width="1.2" stroke-linejoin="round"/><path d="M82.6,38.3 H91.2 M82.6,40.4 H91.2 M82.6,42.5 H91.2" stroke="#555" stroke-width="0.9"/><path d="M108,39.1 L109.7,41.1 L107.6,43.6 M112.9,36.2 L110.5,38.5 L112.7,40.9" fill="none" stroke="#666" stroke-width="0.95"/><path d="M459.2,40.6 H466 M461.8,37.9 L459.2,40.6 L461.8,43.3" fill="none" stroke="#555" stroke-width="1"/><path d="M479,40.6 H485.6 M483,37.9 L485.6,40.6 L483,43.3" fill="none" stroke="#b5b5b5" stroke-width="1"/><circle cx="610.2" cy="39.3" r="2.8" fill="none" stroke="#444" stroke-width="0.95"/><path d="M608.2,41.4 L605.6,44" stroke="#444" stroke-width="1"/><path d="M706.3,39.2 L708.6,41.5 L710.9,39.2" fill="none" stroke="#555" stroke-width="0.9"/><path d="M836.4,37.4 L841.6,40.5 L836.4,43.6 Z" fill="none" stroke="#333" stroke-width="1.1" stroke-linejoin="round"/><path d="M1179.88,39.23 L1181.23,39.63 L1181.23,41.17 L1179.88,41.57 L1179.83,41.68 L1180.51,42.92 L1179.42,44.01 L1178.18,43.33 L1178.07,43.38 L1177.67,44.73 L1176.13,44.73 L1175.73,43.38 L1175.62,43.33 L1174.38,44.01 L1173.29,42.92 L1173.97,41.68 L1173.92,41.57 L1172.57,41.17 L1172.57,39.63 L1173.92,39.23 L1173.97,39.12 L1173.29,37.88 L1174.38,36.79 L1175.62,37.47 L1175.73,37.42 L1176.13,36.07 L1177.67,36.07 L1178.07,37.42 L1178.18,37.47 L1179.42,36.79 L1180.51,37.88 L1179.83,39.12 Z M1178.3000000000002,40.4 A1.4,1.4 0 1 0 1175.5,40.4 A1.4,1.4 0 1 0 1178.3000000000002,40.4 Z" fill="#1e1e1e" fill-rule="evenodd"/><path d="M1199.8,40.6 H1206.2" stroke="#777" stroke-width="0.9"/><rect x="1225.8" y="37.6" width="5.6" height="5.6" fill="none" stroke="#777" stroke-width="0.9"/><path d="M1252,37.3 L1258,43.3 M1258,37.3 L1252,43.3" stroke="#666" stroke-width="0.95"/><path d="M63.2,60.6 h3.4 l2,2 v4.2 a0.9,0.9 0 0 1 -0.9,0.9 h-3.6 a0.9,0.9 0 0 1 -0.9,-0.9 z" fill="none" stroke="#555" stroke-width="0.9"/><path d="M61.5,62.8 v4.6 a1.7,1.7 0 0 0 1.7,1.7 h2.6" fill="none" stroke="#777" stroke-width="0.9"/><rect x="85.3" y="62.6" width="3.4" height="3.1" fill="none" stroke="#555" stroke-width="0.85"/><rect x="85.3" y="65.7" width="3.4" height="3.1" fill="none" stroke="#555" stroke-width="0.85"/><rect x="88.7" y="65.7" width="3.4" height="3.1" fill="none" stroke="#555" stroke-width="0.85"/><rect x="90.4" y="60.5" width="3.2" height="3.2" fill="none" stroke="#555" stroke-width="0.85"/><circle cx="112.3" cy="61.7" r="1.2" fill="none" stroke="#444" stroke-width="0.85"/><circle cx="112.3" cy="68" r="1.2" fill="none" stroke="#444" stroke-width="0.85"/><circle cx="116.3" cy="63.3" r="1.2" fill="none" stroke="#444" stroke-width="0.85"/><path d="M112.3,62.9 V66.8 M115.4,64.2 Q114.4,65.6 112.4,65.7" fill="none" stroke="#444" stroke-width="0.85"/><path d="M137.6,65 V60.7 L143,64.3 L139.6,66.3" fill="none" stroke="#444" stroke-width="0.9" stroke-linejoin="round"/><circle cx="136.9" cy="67.3" r="1.6" fill="none" stroke="#444" stroke-width="1"/><path d="M64.8,124.3 L69,128.5 M69,124.3 L64.8,128.5" stroke="#666" stroke-width="0.9"/><circle cx="67" cy="163.9" r="2" fill="#333"/><circle cx="82.8" cy="126.4" r="3.5" fill="#d58a72" stroke="#b87058" stroke-width="0.8"/><circle cx="82.8" cy="126.60000000000001" r="1.56" fill="#c97a64"/><circle cx="82.8" cy="128.35" r="0.975" fill="#f0b8a4"/><circle cx="82.8" cy="164.0" r="3.5" fill="#d58a72" stroke="#b87058" stroke-width="0.8"/><circle cx="82.8" cy="164.2" r="1.56" fill="#c97a64"/><circle cx="82.8" cy="165.95" r="0.975" fill="#f0b8a4"/><path d="M62.4,205.1 L64.8,207.5 L62.4,209.9" fill="none" stroke="#666" stroke-width="0.85"/><path d="M72.8,204.3 h2.8 l1,1 h3.9 v5.6 h-7.7 z" fill="#2f2f2f"/><path d="M62.4,223.95999999999998 L64.8,226.35999999999999 L62.4,228.76" fill="none" stroke="#666" stroke-width="0.85"/><path d="M72.8,223.16 h2.8 l1,1 h3.9 v5.6 h-7.7 z" fill="#2f2f2f"/><path d="M62.4,242.82 L64.8,245.22 L62.4,247.62" fill="none" stroke="#666" stroke-width="0.85"/><path d="M72.8,242.02 h2.8 l1,1 h3.9 v5.6 h-7.7 z" fill="#2f2f2f"/><path d="M62.4,261.68 L64.8,264.08 L62.4,266.47999999999996" fill="none" stroke="#666" stroke-width="0.85"/><path d="M72.8,260.88 h2.8 l1,1 h3.9 v5.6 h-7.7 z" fill="#2f2f2f"/><path d="M62.4,280.53999999999996 L64.8,282.93999999999994 L62.4,285.3399999999999" fill="none" stroke="#666" stroke-width="0.85"/><path d="M72.8,279.73999999999995 h2.8 l1,1 h3.9 v5.6 h-7.7 z" fill="#2f2f2f"/><path d="M61.2,300.8999999999999 L63.6,303.29999999999995 L66.0,300.8999999999999" fill="none" stroke="#666" stroke-width="0.85"/><path d="M72.8,298.59999999999997 h2.8 l1,1 h3.6 v1.6 h-6.2 l-1.2,4 z" fill="#2f2f2f"/><path d="M73.8,301.59999999999997 h7.2 l-1.2,3.3 h-7 z" fill="#444"/><path d="M69.0,318.26 L71.4,320.65999999999997 L69.0,323.05999999999995" fill="none" stroke="#666" stroke-width="0.85"/><path d="M79.39999999999999,317.46 h2.8 l1,1 h3.9 v5.6 h-7.7 z" fill="#2f2f2f"/><path d="M69.0,337.12 L71.4,339.52 L69.0,341.91999999999996" fill="none" stroke="#666" stroke-width="0.85"/><path d="M79.39999999999999,336.32 h2.8 l1,1 h3.9 v5.6 h-7.7 z" fill="#2f2f2f"/><circle cx="83.0" cy="358.38" r="3.5" fill="#d58a72" stroke="#b87058" stroke-width="0.8"/><circle cx="83.0" cy="358.58" r="1.56" fill="#c97a64"/><circle cx="83.0" cy="360.33" r="0.975" fill="#f0b8a4"/><circle cx="83.0" cy="377.24" r="3.5" fill="#d58a72" stroke="#b87058" stroke-width="0.8"/><circle cx="83.0" cy="377.44" r="1.56" fill="#c97a64"/><circle cx="83.0" cy="379.19" r="0.975" fill="#f0b8a4"/><circle cx="83.0" cy="396.09999999999997" r="3.5" fill="#d58a72" stroke="#b87058" stroke-width="0.8"/><circle cx="83.0" cy="396.29999999999995" r="1.56" fill="#c97a64"/><circle cx="83.0" cy="398.04999999999995" r="0.975" fill="#f0b8a4"/><circle cx="83.0" cy="414.9599999999999" r="3.5" fill="#d58a72" stroke="#b87058" stroke-width="0.8"/><circle cx="83.0" cy="415.1599999999999" r="1.56" fill="#c97a64"/><circle cx="83.0" cy="416.9099999999999" r="0.975" fill="#f0b8a4"/><circle cx="83.0" cy="433.81999999999994" r="3.5" fill="#d58a72" stroke="#b87058" stroke-width="0.8"/><circle cx="83.0" cy="434.0199999999999" r="1.56" fill="#c97a64"/><circle cx="83.0" cy="435.7699999999999" r="0.975" fill="#f0b8a4"/><circle cx="83.0" cy="452.67999999999995" r="3.5" fill="#d58a72" stroke="#b87058" stroke-width="0.8"/><circle cx="83.0" cy="452.87999999999994" r="1.56" fill="#c97a64"/><circle cx="83.0" cy="454.62999999999994" r="0.975" fill="#f0b8a4"/><circle cx="83.0" cy="471.53999999999996" r="3.5" fill="#d58a72" stroke="#b87058" stroke-width="0.8"/><circle cx="83.0" cy="471.73999999999995" r="1.56" fill="#c97a64"/><circle cx="83.0" cy="473.48999999999995" r="0.975" fill="#f0b8a4"/><circle cx="83.0" cy="490.4" r="3.5" fill="#d58a72" stroke="#b87058" stroke-width="0.8"/><circle cx="83.0" cy="490.59999999999997" r="1.56" fill="#c97a64"/><circle cx="83.0" cy="492.34999999999997" r="0.975" fill="#f0b8a4"/><circle cx="83.0" cy="509.26" r="3.5" fill="#d58a72" stroke="#b87058" stroke-width="0.8"/><circle cx="83.0" cy="509.46" r="1.56" fill="#c97a64"/><circle cx="83.0" cy="511.21" r="0.975" fill="#f0b8a4"/><circle cx="83.0" cy="528.12" r="3.5" fill="#d58a72" stroke="#b87058" stroke-width="0.8"/><circle cx="83.0" cy="528.32" r="1.56" fill="#c97a64"/><circle cx="83.0" cy="530.07" r="0.975" fill="#f0b8a4"/><circle cx="83.0" cy="546.98" r="3.5" fill="#d58a72" stroke="#b87058" stroke-width="0.8"/><circle cx="83.0" cy="547.1800000000001" r="1.56" fill="#c97a64"/><circle cx="83.0" cy="548.9300000000001" r="0.975" fill="#f0b8a4"/><path d="M62.4,563.4399999999999 L64.8,565.8399999999999 L62.4,568.2399999999999" fill="none" stroke="#666" stroke-width="0.85"/><path d="M72.8,562.6399999999999 h2.8 l1,1 h3.9 v5.6 h-7.7 z" fill="#2f2f2f"/><path d="M76.4,580.6999999999999 L80.4,584.6999999999999 L76.4,588.6999999999999 L72.4,584.6999999999999 Z" fill="#e06a3a"/><circle cx="76.6" cy="584.6999999999999" r="1" fill="#fff"/><circle cx="76.4" cy="603.56" r="3.5" fill="#d58a72" stroke="#b87058" stroke-width="0.8"/><circle cx="76.4" cy="603.76" r="1.56" fill="#c97a64"/><circle cx="76.4" cy="605.51" r="0.975" fill="#f0b8a4"/><circle cx="76.4" cy="622.42" r="3.5" fill="#d58a72" stroke="#b87058" stroke-width="0.8"/><circle cx="76.4" cy="622.62" r="1.56" fill="#c97a64"/><circle cx="76.4" cy="624.37" r="0.975" fill="#f0b8a4"/><path d="M72.6,640.28 h7" stroke="#555" stroke-width="1.4"/><path d="M258.90000000000003,62.4 L256.3,65 L258.90000000000003,67.6" fill="none" stroke="#777" stroke-width="0.9"/><path d="M276.2,62.4 L278.8,65 L276.2,67.6" fill="none" stroke="#777" stroke-width="0.9"/><circle cx="299.8" cy="64.8" r="3.4" fill="#d58a72" stroke="#b87058" stroke-width="0.8"/><circle cx="299.8" cy="65.0" r="1.52" fill="#c97a64"/><circle cx="299.8" cy="66.7" r="0.95" fill="#f0b8a4"/><circle cx="359.6" cy="64.9" r="2" fill="#333"/><path d="M385.99,63.77 L387.23,64.16 L387.23,65.64 L385.99,66.03 L385.94,66.14 L386.55,67.30 L385.50,68.35 L384.34,67.74 L384.23,67.79 L383.84,69.03 L382.36,69.03 L381.97,67.79 L381.86,67.74 L380.70,68.35 L379.65,67.30 L380.26,66.14 L380.21,66.03 L378.97,65.64 L378.97,64.16 L380.21,63.77 L380.26,63.66 L379.65,62.50 L380.70,61.45 L381.86,62.06 L381.97,62.01 L382.36,60.77 L383.84,60.77 L384.23,62.01 L384.34,62.06 L385.50,61.45 L386.55,62.50 L385.94,63.66 Z M384.40000000000003,64.9 A1.3,1.3 0 1 0 381.8,64.9 A1.3,1.3 0 1 0 384.40000000000003,64.9 Z" fill="#1e1e1e" fill-rule="evenodd"/><path d="M436.8,62.8 L440.8,66.8 M440.8,62.8 L436.8,66.8" stroke="#555" stroke-width="0.9"/><rect x="722.6" y="61.4" width="7" height="6.6" rx="0.8" fill="none" stroke="#555" stroke-width="0.85"/><path d="M726.1,61.4 V68" stroke="#555" stroke-width="0.85"/><path d="M742,62.8 L746,66.8 M746,62.8 L742,66.8" stroke="#555" stroke-width="0.9"/><path d="M569.8,292.2 L571.9,294.29999999999995 L574,292.2" fill="none" stroke="#555" stroke-width="0.85"/><path d="M569.8,370.95 L571.9,373.04999999999995 L574,370.95" fill="none" stroke="#555" stroke-width="0.85"/><path d="M415.1,427.0 L417.0,429.0 L420.7,423.8" fill="none" stroke="#222" stroke-width="1.05"/><path d="M769.3,62.4 L766.7,65 L769.3,67.6" fill="none" stroke="#777" stroke-width="0.9"/><path d="M786.3000000000001,62.4 L788.9,65 L786.3000000000001,67.6" fill="none" stroke="#777" stroke-width="0.9"/><circle cx="810.8" cy="64.8" r="3.4" fill="#d58a72" stroke="#b87058" stroke-width="0.8"/><circle cx="810.8" cy="65.0" r="1.52" fill="#c97a64"/><circle cx="810.8" cy="66.7" r="0.95" fill="#f0b8a4"/><path d="M863.8,62.8 L867.8,66.8 M867.8,62.8 L863.8,66.8" stroke="#555" stroke-width="0.9"/><rect x="1232" y="61.4" width="7" height="6.6" rx="0.8" fill="none" stroke="#555" stroke-width="0.85"/><path d="M1235.5,61.4 V68" stroke="#555" stroke-width="0.85"/><path d="M1253,62.8 L1257,66.8 M1257,62.8 L1253,66.8" stroke="#555" stroke-width="0.9"/><path d="M778.4,81.8 L780.6,84.4 L778.4,87" fill="none" stroke="#666" stroke-width="0.8"/><rect x="254.3" y="463.0" width="7.4" height="7.4" rx="0.6" fill="none" stroke="#555" stroke-width="0.85"/><path d="M256.7,465.0 L258.6,466.7 L256.7,468.4" fill="none" stroke="#555" stroke-width="0.85"/><circle cx="259.6" cy="489.8" r="2.9" fill="none" stroke="#555" stroke-width="0.85"/><path d="M257.5,492 L254.6,495" stroke="#555" stroke-width="0.9"/><circle cx="258" cy="516.3" r="3.4" fill="none" stroke="#555" stroke-width="0.85"/><path d="M256.4,514.7 L259.6,517.9 M259.6,514.7 L256.4,517.9" stroke="#555" stroke-width="0.8"/><rect x="278.9" y="462.9" width="7.0" height="7.0" rx="0.6" fill="none" stroke="#555" stroke-width="0.85"/><path d="M281.29999999999995,464.9 L283.2,466.59999999999997 L281.29999999999995,468.29999999999995" fill="none" stroke="#555" stroke-width="0.85"/><path d="M390,464.6 L394,468.6 M394,464.6 L390,468.6" stroke="#555" stroke-width="0.9"/><path d="M560.8,598.3 L560.8,608.8 L563.3,606.5 L566.3,612.9 L568.1,612 L565.3,605.9 L568.4,605.7 Z" fill="#0a0a0a" stroke="#fff" stroke-width="1.5" stroke-linejoin="round" paint-order="stroke"/><circle cx="62" cy="647.6" r="1" fill="none" stroke="#555" stroke-width="0.8"/><circle cx="62" cy="654.2" r="1" fill="none" stroke="#555" stroke-width="0.8"/><circle cx="65.6" cy="649" r="1" fill="none" stroke="#555" stroke-width="0.8"/><path d="M62,648.6 V653.2 M65.3,650 Q64.6,651.8 62.2,652.2" fill="none" stroke="#555" stroke-width="0.8"/><circle cx="117.7" cy="650.6" r="3.6" fill="none" stroke="#555" stroke-width="0.8"/><path d="M116,648.9 L119.4,652.3 M119.4,648.9 L116,652.3" stroke="#555" stroke-width="0.8"/><path d="M142.9,646.8 L146.6,653.8 H139.2 Z" fill="none" stroke="#555" stroke-width="0.8" stroke-linejoin="round"/><path d="M142.9,649.2 V651.6" stroke="#555" stroke-width="0.7"/><rect x="640.6" y="647.4" width="7" height="7" fill="none" stroke="#444" stroke-width="0.8"/><rect x="640.6" y="647.4" width="2.8" height="7" fill="#333"/><rect x="656" y="647.4" width="7" height="7" fill="none" stroke="#444" stroke-width="0.8"/><rect x="656" y="651.8" width="7" height="2.6" fill="#333"/><rect x="671.4" y="647.4" width="7" height="7" fill="none" stroke="#444" stroke-width="0.8"/><path d="M674.9,647.4 V654.4" stroke="#444" stroke-width="0.8"/></svg>
</body></html>
